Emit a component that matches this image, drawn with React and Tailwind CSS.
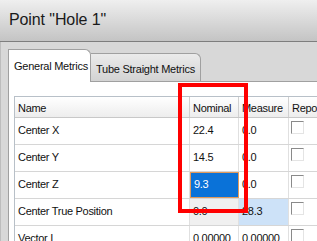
import React from 'react';

const rows = [
    { name: 'Center X', nominal: '22.4', measure: '0.0' },
    { name: 'Center Y', nominal: '14.5', measure: '0.0' },
    { name: 'Center Z', nominal: '9.3', measure: '0.0', selected: true },
    { name: 'Center True Position', nominal: '0.0', measure: '28.3', readOnly: true },
    { name: 'Vector I', nominal: '0.00000', measure: '0.00000' },
];

const CheckBox = () => (
    <div className="mt-[3px] ml-[2px] w-[13px] h-[13px] bg-white border-t border-l border-[#8a8a8a] border-r border-b border-r-[#e4e4e4] border-b-[#e4e4e4]" />
);

export default function App() {
    return (
        <div className="relative w-[317px] h-[241px] overflow-hidden bg-[#d6d6d6] text-[11px] text-[#111] tracking-[-0.3px] font-['Liberation_Sans',Arial,sans-serif]">
            {/* --- TITLE BAR --- */}
            <div className="h-[42px] flex items-center pl-[9px] bg-gradient-to-b from-[#efefef] to-[#c4c4c4] border-b border-[#7e7e7e]">
                <span className="text-[16px] text-[#1a1a1a] tracking-[-0.1px] pb-[1px]">Point "Hole 1"</span>
            </div>

            <div className="flex h-[199px] pl-[2px] border-l border-[#bdbdbd] bg-[#d8d8d8]">
                <div className="w-[1px] bg-[#a8a8a8]" />
                <div className="flex-1 flex flex-col pl-[5px]">
                    {/* --- TABS --- */}
                    <div className="flex items-end h-[39px] pt-[7px]">
                        <div className="relative h-[33px] w-[83px] -mb-[1px] bg-white border border-b-0 border-[#a0a0a0] rounded-tr-[6px] flex pt-[8px] pl-[5px] z-10">
                            <span className="tracking-[-0.25px]">General Metrics</span>
                        </div>
                        <div className="h-[28px] w-[110px] bg-gradient-to-b from-[#ebebeb] to-[#d3d3d3] border border-l-0 border-b-0 border-[#a0a0a0] rounded-tr-[6px] flex pt-[7px] pl-[5px]">
                            <span className="tracking-[-0.25px]">Tube Straight Metrics</span>
                        </div>
                    </div>

                    {/* --- CONTENT --- */}
                    <div className="flex-1 bg-white border-t border-l border-[#a0a0a0] pl-[5px] pt-[14px]">
                        <div className="border-t border-l border-[#b8c0c8]">
                            <div className="grid grid-cols-[175px_49px_50px_1fr] h-[21px] bg-gradient-to-b from-white to-[#ededed] border-b border-[#c8c8c8]">
                                <div className="pl-[3px] pt-[3px] border-r border-[#d0d0d0]">Name</div>
                                <div className="pl-[3px] pt-[3px] border-r border-[#d0d0d0]">Nominal</div>
                                <div className="pl-[3px] pt-[3px] border-r border-[#d0d0d0]">Measure</div>
                                <div className="pl-[3px] pt-[3px]">Report</div>
                            </div>
                            {rows.map((r) => (
                                <div key={r.name} className="grid grid-cols-[175px_49px_50px_1fr] h-[27px] border-b border-[#d6d6d6]">
                                    <div className="pl-[3px] pt-[4px] border-r border-[#e0e0e0]">{r.name}</div>
                                    {r.selected ? (
                                        <div className="pl-[3px] pt-[3px] bg-[#0a72d8] text-white border border-[#e09a5c]">{r.nominal}</div>
                                    ) : (
                                        <div className={`pl-[3px] pt-[4px] border-r border-[#e0e0e0] ${r.readOnly ? 'bg-[#f0f0f0]' : ''}`}>{r.nominal}</div>
                                    )}
                                    <div className={`pl-[3px] pt-[4px] border-r border-[#e0e0e0] ${r.readOnly ? 'bg-[#cde2f8]' : ''}`}>{r.measure}</div>
                                    <div><CheckBox /></div>
                                </div>
                            ))}
                        </div>
                    </div>
                </div>
            </div>

            {/* --- HIGHLIGHT OVERLAY --- */}
            <div className="absolute left-[178px] top-[83px] w-[70px] h-[130px] border-[4px] border-[#ff0000]" />
        </div>
    );
}
